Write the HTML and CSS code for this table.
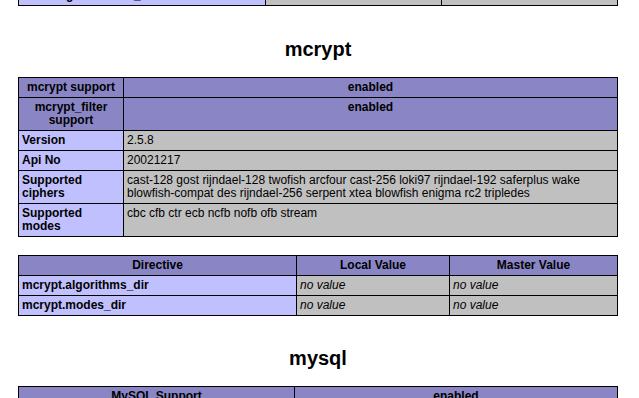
FILE: index.html
```html
<!DOCTYPE html>
<html>
<head>
<meta charset="utf-8">
<title>phpinfo()</title>
<link rel="stylesheet" href="styles.css">
</head>
<body>
<div class="page">
  <table class="info">
    <colgroup><col class="w-prev1"><col class="w-prev2"><col></colgroup>
    <tr><td class="e">mbstring.substitute_character</td><td class="v"><i>no value</i></td><td class="v"><i>no value</i></td></tr>
  </table>

  <h2>mcrypt</h2>
  <table class="info">
    <colgroup><col class="w-key"><col></colgroup>
    <tr class="h"><th>mcrypt support</th><th>enabled</th></tr>
    <tr class="h"><th>mcrypt_filter support</th><th>enabled</th></tr>
    <tr><td class="e">Version </td><td class="v">2.5.8 </td></tr>
    <tr><td class="e">Api No </td><td class="v">20021217 </td></tr>
    <tr><td class="e">Supported ciphers </td><td class="v">cast-128 gost rijndael-128 twofish arcfour cast-256 loki97 rijndael-192 saferplus wake blowfish-compat des rijndael-256 serpent xtea blowfish enigma rc2 tripledes </td></tr>
    <tr><td class="e">Supported modes </td><td class="v">cbc cfb ctr ecb ncfb nofb ofb stream </td></tr>
  </table>
  <div class="gap"></div>
  <table class="info">
    <colgroup><col class="w-dir"><col class="w-local"><col></colgroup>
    <tr class="h"><th>Directive</th><th>Local Value</th><th>Master Value</th></tr>
    <tr><td class="e">mcrypt.algorithms_dir</td><td class="v"><i>no value</i></td><td class="v"><i>no value</i></td></tr>
    <tr><td class="e">mcrypt.modes_dir</td><td class="v"><i>no value</i></td><td class="v"><i>no value</i></td></tr>
  </table>

  <h2 class="next">mysql</h2>
  <table class="info">
    <colgroup><col class="w-mysql"><col></colgroup>
    <tr class="h"><th>MySQL Support</th><th>enabled</th></tr>
    <tr><td class="e">Active Persistent Links </td><td class="v">0 </td></tr>
  </table>
</div>
</body>
</html>
```
FILE: styles.css
```css
html, body {
  margin: 0;
  padding: 0;
  background: #ffffff;
  color: #000000;
  font-family: "Liberation Sans", Arial, Helvetica, sans-serif;
}

.page {
  width: 600px;
  margin-left: 18px;
  margin-top: -15px;
}

table.info {
  width: 600px;
  border-collapse: collapse;
  table-layout: fixed;
}

td, th {
  border: 1px solid #000000;
  font-size: 12px;
  line-height: 13px;
  padding: 3px;
  vertical-align: baseline;
  text-align: left;
}

th {
  text-align: center;
}

.h {
  background-color: #8a86c6;
  font-weight: bold;
}

.e {
  background-color: #c0c0fe;
  font-weight: bold;
}

.v {
  background-color: #c0c0c0;
}

.w-prev1 { width: 247px; }
.w-prev2 { width: 176px; }
.w-key { width: 105px; }
.w-dir { width: 278px; }
.w-local { width: 153px; }
.w-mysql { width: 276px; }

h2 {
  margin: 0;
  padding: 32px 0 17px;
  font-size: 20px;
  line-height: 22px;
  text-align: center;
}

h2.next {
  padding-top: 31px;
}

.gap {
  height: 18px;
}
```
